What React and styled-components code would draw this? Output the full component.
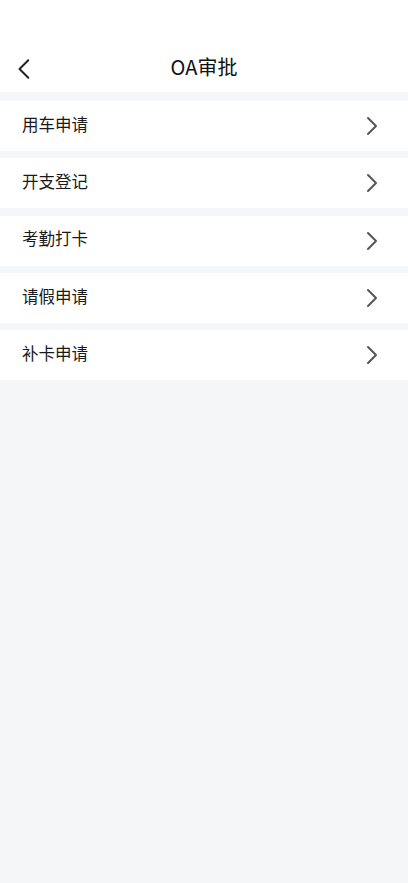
import React from "react";
import styled, { createGlobalStyle } from "styled-components";

const GlobalStyle = createGlobalStyle`
  html, body {
    margin: 0;
    padding: 0;
    background: #f5f6f8;
    font-family: "Noto Sans CJK SC", "Noto Sans", sans-serif;
  }
`;

const Page = styled.div`
  min-height: 883px;
  background: #f5f6f8;
`;

const Header = styled.header`
  background: #fff;
  padding-top: 44px;
`;

const NavBar = styled.div`
  height: 48px;
  display: flex;
  align-items: center;
  justify-content: center;
  position: relative;
`;

const BackButton = styled.button`
  position: absolute;
  left: 13px;
  top: 13px;
  width: 24px;
  height: 24px;
  padding: 0;
  border: none;
  background: none;
  display: flex;
  align-items: center;
  justify-content: center;
`;

const Title = styled.h1`
  margin: 0 0 3px;
  font-size: 20px;
  line-height: 1.3;
  font-weight: 400;
  color: #111;
`;

const List = styled.ul`
  list-style: none;
  margin: 0;
  padding: 9px 0 0;
  display: flex;
  flex-direction: column;
  gap: 7.25px;
`;

const Row = styled.li`
  height: 50px;
  background: #fff;
  display: flex;
  align-items: center;
  justify-content: space-between;
  padding: 0 26px 0 22px;
`;

const Label = styled.span`
  font-size: 16.5px;
  line-height: 1.3;
  margin-bottom: 3px;
  color: #1a1a1a;
`;

const items = ["用车申请", "开支登记", "考勤打卡", "请假申请", "补卡申请"];

const Chevron = ({ color = "#555", size = 20, left }) => (
  <svg width={size} height={size} viewBox="0 0 20 20" fill="none">
    <path
      d={left ? "M13 2 L5 10 L13 18" : "M6 2 L14 10 L6 18"}
      stroke={color}
      strokeWidth={left ? 1.8 : 2}
      strokeLinecap="round"
      strokeLinejoin="round"
    />
  </svg>
);

export default function App() {
  return (
    <>
      <GlobalStyle />
      <Page>
        <Header>
          <NavBar>
            <BackButton>
              <Chevron left color="#222" size={22} />
            </BackButton>
            <Title>OA审批</Title>
          </NavBar>
        </Header>
        <List>
          {items.map((t) => (
            <Row key={t}>
              <Label>{t}</Label>
              <Chevron />
            </Row>
          ))}
        </List>
      </Page>
    </>
  );
}
